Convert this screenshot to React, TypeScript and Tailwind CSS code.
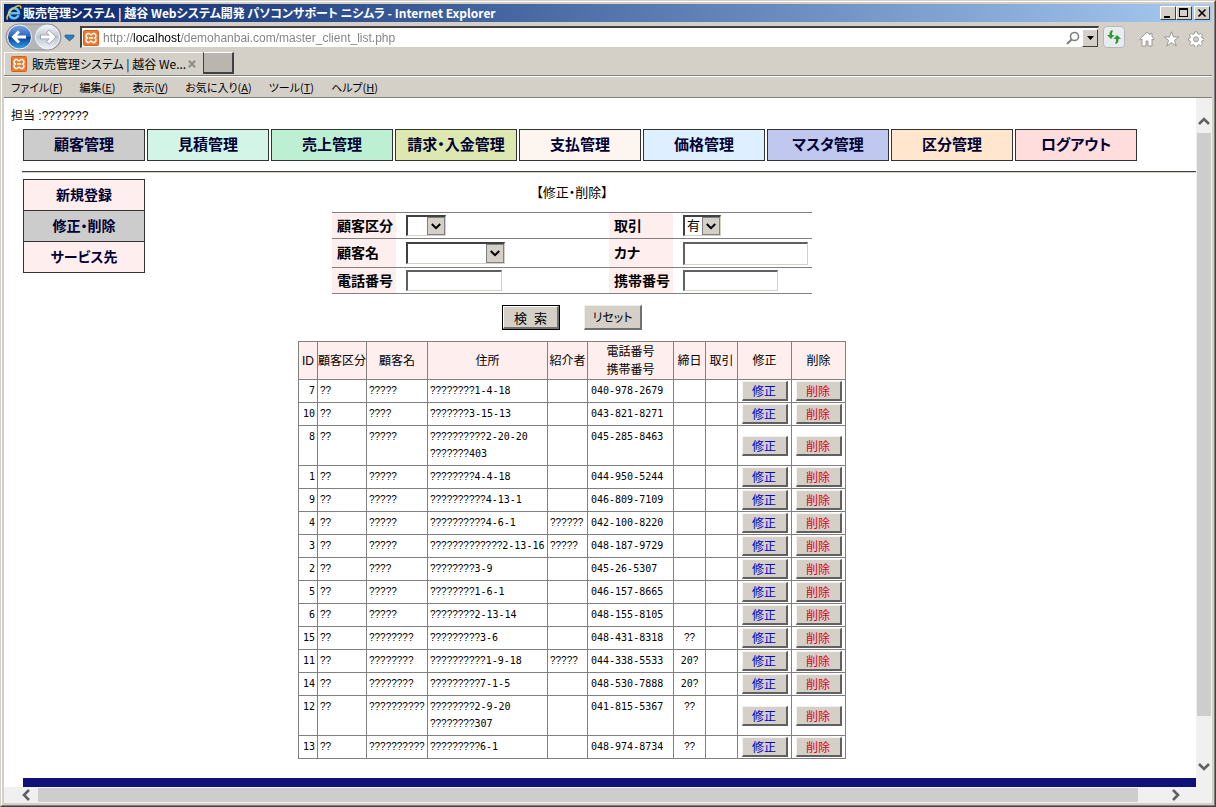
import React from 'react';

const JP = "font-['Liberation_Sans','Noto_Sans_CJK_JP',sans-serif]";

const NAV = [
  { label: '顧客管理', color: 'bg-[#cccccc]' },
  { label: '見積管理', color: 'bg-[#d3f5e8]' },
  { label: '売上管理', color: 'bg-[#bdf0d2]' },
  { label: '請求・入金管理', color: 'bg-[#dce8b0]' },
  { label: '支払管理', color: 'bg-[#fdf5f0]' },
  { label: '価格管理', color: 'bg-[#deefff]' },
  { label: 'マスタ管理', color: 'bg-[#c0c8f0]' },
  { label: '区分管理', color: 'bg-[#ffe6cc]' },
  { label: 'ログアウト', color: 'bg-[#ffdddd]' },
];

const SIDE = [
  { label: '新規登録', color: 'bg-[#ffeeee]' },
  { label: '修正・削除', color: 'bg-[#cccccc]' },
  { label: 'サービス先', color: 'bg-[#ffeeee]' },
];

const MENUS = [
  ['ファイル', 'F'],
  ['編集', 'E'],
  ['表示', 'V'],
  ['お気に入り', 'A'],
  ['ツール', 'T'],
  ['ヘルプ', 'H'],
];

interface Client {
  id: number;
  name: string;
  address: string[];
  referrer?: string;
  tel: string;
  closing?: string;
}

const CLIENTS: Client[] = [
  { id: 7, name: '?????', address: ['????????1-4-18'], tel: '040-978-2679' },
  { id: 10, name: '????', address: ['???????3-15-13'], tel: '043-821-8271' },
  { id: 8, name: '?????', address: ['??????????2-20-20', '???????403'], tel: '045-285-8463' },
  { id: 1, name: '?????', address: ['????????4-4-18'], tel: '044-950-5244' },
  { id: 9, name: '?????', address: ['??????????4-13-1'], tel: '046-809-7109' },
  { id: 4, name: '?????', address: ['??????????4-6-1'], referrer: '??????', tel: '042-100-8220' },
  { id: 3, name: '?????', address: ['?????????????2-13-16'], referrer: '?????', tel: '048-187-9729' },
  { id: 2, name: '????', address: ['????????3-9'], tel: '045-26-5307' },
  { id: 5, name: '?????', address: ['????????1-6-1'], tel: '046-157-8665' },
  { id: 6, name: '?????', address: ['????????2-13-14'], tel: '048-155-8105' },
  { id: 15, name: '????????', address: ['?????????3-6'], tel: '048-431-8318', closing: '??' },
  { id: 11, name: '????????', address: ['??????????1-9-18'], referrer: '?????', tel: '044-338-5533', closing: '20?' },
  { id: 14, name: '????????', address: ['?????????7-1-5'], tel: '048-530-7888', closing: '20?' },
  { id: 12, name: '??????????', address: ['????????2-9-20', '????????307'], tel: '041-815-5367', closing: '??' },
  { id: 13, name: '??????????', address: ['?????????6-1'], tel: '048-974-8734', closing: '??' },
];

// Numbers are set in a fixed width face, everything else in the proportional one
const Mixed: React.FC<{ text: string }> = ({ text }) => (
  <>
    {(text.match(/[\d-]+|[^\d-]+/g) || []).map((part, i) =>
      /[\d-]/.test(part) ? (
        <span key={i} className="font-['DejaVu_Sans_Mono',monospace]">{part}</span>
      ) : (
        <span key={i}>{part}</span>
      )
    )}
  </>
);

const IeLogo = () => (
  <svg viewBox="0 0 16 16" className="w-4 h-4 shrink-0" aria-hidden="true">
    <path d="M12.6 10.2A5 5 0 1 1 13 8.3H4.5" fill="none" stroke="#5cc3f3" strokeWidth="2.6" />
    <path d="M1.6 14.6C-.6 12 4 4.6 9.5 1.8 13 0 15.5.6 14.8 3.6" fill="none" stroke="#f5c53c" strokeWidth="1.4" />
  </svg>
);

const XamppIcon = () => (
  <svg viewBox="0 0 16 16" className="w-4 h-4 shrink-0" aria-hidden="true">
    <rect x=".5" y=".5" width="15" height="15" rx="1" fill="#ee7a2d" stroke="#d9601c" />
    <path d="M4.500 3.500h1.500l2 1.500 2-1.500h1.500l1.300 1.500v2l-1.300 1 1.300 1v2l-1.300 1.500H10L8 11l-2 1.500H4.500L3.200 11V9l1.300-1-1.300-1V5z" fill="none" stroke="#fff" strokeWidth="1.5" strokeLinejoin="round" />
    <path d="M6 8h4" stroke="#fff" strokeWidth="1.6" />
  </svg>
);

const Caption: React.FC<{ label: string; children: React.ReactNode }> = ({ label, children }) => (
  <button
    aria-label={label}
    className="w-4 h-[14px] bg-[#d4d0c8] border border-t-white border-l-white border-r-[#404040] border-b-[#404040] flex items-center justify-center"
  >
    <svg viewBox="0 0 12 10" className="w-3 h-[10px]" aria-hidden="true" shapeRendering="crispEdges">
      {children}
    </svg>
  </button>
);

const TitleBar = () => (
  <div className="h-[18px] bg-linear-to-r from-[#0a246a] to-[#a6caf0] flex items-center pl-[2px] pr-[2px]">
    <IeLogo />
    <h1 className="flex-1 ml-[1px] text-white font-bold text-[12px] leading-[18px] whitespace-nowrap font-['Noto_Sans_CJK_JP',sans-serif] [font-feature-settings:'palt']">
      販売管理システム | 越谷 Webシステム開発 パソコンサポート ニシムラ - Internet Explorer
    </h1>
    <div className="flex">
      <Caption label="最小化"><path d="M2 8h6v2H2z" /></Caption>
      <Caption label="最大化"><path d="M1 0h9v9H1zM2 2v6h7V2z" fillRule="evenodd" /></Caption>
      <span className="w-[2px]" />
      <Caption label="閉じる">
        <path d="M2.5 1.5l7 7M9.5 1.5l-7 7" stroke="#000" strokeWidth="1.6" shapeRendering="auto" />
      </Caption>
    </div>
  </div>
);

const AddressRow = () => (
  <div className="h-[30px] flex items-center">
    <div className="w-[76px] shrink-0 flex items-center">
      <svg viewBox="0 0 74 30" className="w-[74px] h-[30px]" aria-hidden="true">
        <defs>
          <linearGradient id="back" x1="0" y1="0" x2="0" y2="1">
            <stop offset="0" stopColor="#7aa5e0" />
            <stop offset=".48" stopColor="#2a62bd" />
            <stop offset=".52" stopColor="#0f3f98" />
            <stop offset="1" stopColor="#35a5ec" />
          </linearGradient>
          <linearGradient id="fwd" x1="0" y1="0" x2="0" y2="1">
            <stop offset="0" stopColor="#f5f7fa" />
            <stop offset=".5" stopColor="#bcc5d1" />
            <stop offset="1" stopColor="#eef2f8" />
          </linearGradient>
        </defs>
        <rect x="2" y="2" width="55" height="26" rx="13" fill="#b4b6ba" stroke="#8d9096" />
        <circle cx="15.5" cy="15" r="12" fill="url(#back)" stroke="#f0f4fa" />
        <circle cx="43.5" cy="15" r="12" fill="url(#fwd)" stroke="#f0f4fa" />
        <path d="M22 15H10M15 9.500L9.500 15l5.500 5.500" fill="none" stroke="#fff" strokeWidth="3" />
        <path d="M36 15h12M43.500 9l6 6-6 6" fill="none" stroke="#9aa1ab" strokeWidth="4.4" />
        <path d="M37 15h12M44 9.500l5.500 5.500-5.500 5.500" fill="none" stroke="#fff" strokeWidth="3" />
        <path d="M61 13h9v2l-4.500 4-4.500-4z" fill="#2c7fc0" stroke="#1b5288" strokeWidth=".6" />
      </svg>
    </div>
    <div className="flex-1 h-[22px] bg-white border-t-2 border-l-2 border-t-[#404040] border-l-[#404040] border-b border-r border-b-[#d4d0c8] border-r-[#d4d0c8] flex items-center pl-[1px]">
      <XamppIcon />
      <input
        aria-label="アドレス"
        readOnly
        value="http://localhost/demohanbai.com/master_client_list.php"
        className="flex-1 min-w-0 ml-1 outline-none text-[12px] leading-4 font-['Liberation_Sans',sans-serif] text-transparent bg-clip-text bg-[linear-gradient(90deg,#808080_30px,#000_30px,#000_78px,#808080_78px)]"
      />
      <svg viewBox="0 0 14 14" className="w-[14px] h-[14px] mr-[2px]" aria-hidden="true">
        <circle cx="8.5" cy="5.5" r="4" fill="none" stroke="#808080" strokeWidth="1.6" />
        <path d="M5.500 8.500L1 13" stroke="#808080" strokeWidth="2.2" />
      </svg>
      <button aria-label="履歴" className="w-4 h-[18px] bg-[#d4d0c8] border border-t-white border-l-white border-r-[#404040] border-b-[#404040] flex items-center justify-center">
        <svg viewBox="0 0 7 4" className="w-[7px] h-1" aria-hidden="true"><path d="M0 0h7L3.5 4z" /></svg>
      </button>
    </div>
    <button aria-label="最新の情報に更新" className="w-[22px] h-[22px] ml-1 rounded-sm border border-[#b4b8be] bg-[#e9ecee] flex items-center justify-center">
      <svg viewBox="0 0 16 16" className="w-4 h-4" aria-hidden="true" fill="#2f9a2f">
        <path d="M6 1C3.500 2 3.500 4 3.500 6H1l4 4 3.500-4H6C6 4 6 3 7 2z" />
        <path d="M10 15c2.500-1 2.500-3 2.500-5H15l-4-4-3.500 4H10c0 2 0 3-1 4z" />
      </svg>
    </button>
    <div className="flex items-center gap-2 ml-[14px] mr-2 mt-1">
      <button aria-label="ホーム" className="w-4 h-4">
        <svg viewBox="0 0 16 16" className="w-4 h-4" aria-hidden="true">
          <path d="M8 1L.8 8l1 1 1.200-1v7h4v-5h2v5h4V8l1.200 1 1-1L13 5.800V2.500h-2v1.400z" fill="#fff" stroke="#929292" strokeWidth=".9" />
        </svg>
      </button>
      <button aria-label="お気に入り" className="w-[17px] h-4">
        <svg viewBox="0 0 16 16" className="w-[17px] h-4" aria-hidden="true">
          <path d="M8 .8l2 5.200h5.300L11 9.300l1.700 5.700L8 11.600 3.300 15 5 9.300.7 6H6z" fill="#fff" stroke="#929292" strokeWidth=".9" />
        </svg>
      </button>
      <button aria-label="ツール" className="w-4 h-4">
        <svg viewBox="0 0 16 16" className="w-4 h-4" aria-hidden="true">
          <g fill="#fff" stroke="#929292" strokeWidth=".9">
            <path d="M6.800.8h2.400l.4 2 1.500.6 1.700-1.100 1.700 1.700-1.100 1.700.6 1.300 2 .4v2l-2 .5-.6 1.400 1.100 1.700-1.700 1.700-1.700-1.100-1.500.6-.4 2H6.800l-.4-2-1.500-.6-1.700 1.100L1.500 13l1.100-1.700L2 9.900l-1.500-.5v-2L2 7l.6-1.300L1.500 4l1.700-1.700 1.700 1.100 1.500-.6z" />
            <circle cx="8" cy="8.300" r="2.500" fill="#d4d0c8" />
          </g>
        </svg>
      </button>
    </div>
  </div>
);

const TabRow = () => (
  <div className="h-[23px] flex items-start">
    <div className="h-[23px] w-[198px] border-t border-l border-white flex items-center pl-[6px] pr-[6px]">
      <XamppIcon />
      <span className="flex-1 ml-[5px] text-[12px] leading-4 whitespace-nowrap text-black [font-feature-settings:'palt'] font-['Noto_Sans_CJK_JP',sans-serif]">
        販売管理システム | 越谷 We...
      </span>
      <button aria-label="タブを閉じる" className="w-2 h-2">
        <svg viewBox="0 0 8 8" className="w-2 h-2" aria-hidden="true">
          <path d="M.8.8l6.400 6.400M7.200.8L.8 7.200" stroke="#8c8c8c" strokeWidth="2" />
        </svg>
      </button>
    </div>
    <button aria-label="新しいタブ" className="ml-[1px] w-[31px] h-[22px] bg-[#bab6af] border-t border-t-white border-l border-l-[#404040] border-r-2 border-b-2 border-r-[#404040] border-b-[#404040]" />
  </div>
);

const MenuBar = () => (
  <div className="h-[22px] border-t border-t-white border-b border-b-[#808080] flex items-center pl-[7px] gap-[17px] text-[11px] leading-4 [font-feature-settings:'palt'] font-['Noto_Sans_CJK_JP',sans-serif]">
    {MENUS.map(([label, key]) => (
      <button key={key} className="whitespace-nowrap">
        {label}(<span className="underline">{key}</span>)
      </button>
    ))}
  </div>
);

const SelectBox: React.FC<{ id: string; size: string; options: string[] }> = ({ id, size, options }) => (
  <div className={`relative ${size}`}>
    <select
      id={id}
      className="block appearance-none w-full h-full bg-white border-t-2 border-l-2 border-t-[#404040] border-l-[#404040] border-r border-b border-r-[#d4d0c8] border-b-[#d4d0c8] pl-[2px] text-[13px] leading-4"
    >
      {options.map((o) => <option key={o}>{o}</option>)}
    </select>
    <span className="pointer-events-none absolute top-[2px] bottom-[1px] right-[1px] w-[18px] bg-[#d4d0c8] border border-[#808080] flex items-center justify-center">
      <svg viewBox="0 0 10 7" className="w-[10px] h-[7px]" aria-hidden="true">
        <path d="M.8 1L5 5.200 9.200 1" fill="none" stroke="#000" strokeWidth="2" />
      </svg>
    </span>
  </div>
);

const TextBox: React.FC<{ id: string; size: string }> = ({ id, size }) => (
  <input
    id={id}
    type="text"
    className={`block ${size} bg-white border-t-2 border-l-2 border-t-[#606060] border-l-[#606060] border-r border-b border-r-[#d4d0c8] border-b-[#d4d0c8] px-1 text-[13px]`}
  />
);

const FieldLabel: React.FC<{ htmlFor: string; children: string }> = ({ htmlFor, children }) => (
  <label htmlFor={htmlFor} className="w-16 shrink-0 self-stretch bg-[#ffeeee] pl-[5px] flex items-center font-bold text-[14px] leading-5 whitespace-nowrap">
    {children}
  </label>
);

const SearchForm = () => (
  <form className="flex flex-col items-center" onSubmit={(e) => e.preventDefault()}>
    <div className="w-[480px] max-w-full border-t border-[#808080] [font-feature-settings:'palt']">
      <div className="h-[26px] border-b border-[#808080] flex items-center">
        <FieldLabel htmlFor="kubun">顧客区分</FieldLabel>
        <div className="flex-1 pl-[10px]"><SelectBox id="kubun" size="w-10 h-[21px]" options={['']} /></div>
        <FieldLabel htmlFor="torihiki">取引</FieldLabel>
        <div className="w-[139px] pl-[10px]"><SelectBox id="torihiki" size="w-[38px] h-[21px]" options={['有', '無']} /></div>
      </div>
      <div className="h-[29px] border-b border-[#808080] flex items-center">
        <FieldLabel htmlFor="name">顧客名</FieldLabel>
        <div className="flex-1 pl-[10px]"><SelectBox id="name" size="w-[99px] h-[22px]" options={['']} /></div>
        <FieldLabel htmlFor="kana">カナ</FieldLabel>
        <div className="w-[139px] pl-[10px]"><TextBox id="kana" size="w-[125px] h-[23px]" /></div>
      </div>
      <div className="h-[26px] border-b border-[#808080] flex items-center">
        <FieldLabel htmlFor="tel">電話番号</FieldLabel>
        <div className="flex-1 pl-[10px]"><TextBox id="tel" size="w-24 h-[21px]" /></div>
        <FieldLabel htmlFor="mobile">携帯番号</FieldLabel>
        <div className="w-[139px] pl-[10px]"><TextBox id="mobile" size="w-[95px] h-[21px]" /></div>
      </div>
    </div>
    <div className="flex gap-6 mt-[11px]">
      <div className="w-[58px] h-[25px] border border-black">
        <button type="submit" className="block w-full h-full bg-[#d4d0c8] border border-t-white border-l-white border-r-2 border-b-2 border-r-[#707070] border-b-[#707070] pt-[2px] text-[13px] leading-5 whitespace-pre">検  索</button>
      </div>
      <button type="reset" className="w-[58px] h-[25px] bg-[#d4d0c8] border border-t-[#f0efec] border-l-[#f0efec] border-r-2 border-b-2 border-r-[#707070] border-b-[#707070] pt-[2px] text-[12px] leading-5 whitespace-nowrap [font-feature-settings:'palt']">リセット</button>
    </div>
  </form>
);

const RowButton: React.FC<{ color: string; children: string }> = ({ color, children }) => (
  <button className={`block mx-auto w-[46px] h-5 bg-[#d4d0c8] border border-t-[#f4f3f0] border-l-[#f4f3f0] border-r-2 border-b-2 border-r-[#606060] border-b-[#606060] pt-[2px] text-[12px] leading-4 ${color}`}>
    {children}
  </button>
);

const TH = 'border border-[#808080] p-0 font-normal whitespace-nowrap';
const TD = 'border border-[#808080] px-[2px] pt-[2px] pb-[3px] align-top whitespace-nowrap';

const ClientTable = () => (
  <table className="mx-auto mt-[11px] w-[548px] table-fixed border-collapse">
    <colgroup>
      <col className="w-[19px]" />
      <col className="w-[49px]" />
      <col className="w-[61px]" />
      <col className="w-[120px]" />
      <col className="w-[40px]" />
      <col className="w-[86px]" />
      <col className="w-[32px]" />
      <col className="w-[32px]" />
      <col className="w-[54px]" />
      <col className="w-[54px]" />
    </colgroup>
    <thead>
      <tr className="h-[38px] bg-[#ffeeee] text-[12px] leading-[18px]">
        <th className={TH}>ID</th>
        <th className={TH}>顧客区分</th>
        <th className={TH}>顧客名</th>
        <th className={TH}>住所</th>
        <th className={TH}>紹介者</th>
        <th className={TH}>電話番号<br />携帯番号</th>
        <th className={TH}>締日</th>
        <th className={TH}>取引</th>
        <th className={TH}>修正</th>
        <th className={TH}>削除</th>
      </tr>
    </thead>
    <tbody className="text-[10px] leading-[17px]">
      {CLIENTS.map((client) => (
        <tr key={client.id}>
          <td className={`${TD} text-right`}><Mixed text={String(client.id)} /></td>
          <td className={TD}>??</td>
          <td className={TD}>{client.name}</td>
          <td className={TD}>
            {client.address.map((line) => (
              <div key={line}><Mixed text={line} /></div>
            ))}
          </td>
          <td className={TD}>{client.referrer}</td>
          <td className={TD}><div className="pl-[1px]"><Mixed text={client.tel} /></div></td>
          <td className={`${TD} text-center`}>{client.closing && <Mixed text={client.closing} />}</td>
          <td className={TD} />
          <td className="border border-[#808080] p-0 align-middle"><RowButton color="text-[#0000cc]">修正</RowButton></td>
          <td className="border border-[#808080] p-0 align-middle"><RowButton color="text-[#dd0022]">削除</RowButton></td>
        </tr>
      ))}
    </tbody>
  </table>
);

const Arrow: React.FC<{ label: string; d: string; className: string }> = ({ label, d, className }) => (
  <button aria-label={label} className={`flex items-center justify-center shrink-0 ${className}`}>
    <svg viewBox="0 0 12 12" className="w-3 h-3" aria-hidden="true">
      <path d={d} fill="none" stroke="#606060" strokeWidth="2.6" />
    </svg>
  </button>
);

const Page = () => (
  <div className="flex-1 min-w-0 bg-white flex flex-col pt-[9px]">
    <p className="pl-[7px] text-[12px] leading-[18px]">担当 :???????</p>
    <nav className="flex gap-[2px] ml-[19px] mt-1">
      {NAV.map(({ label, color }) => (
        <a key={label} href="#" className={`w-[122px] h-8 border border-[#333333] flex items-center justify-center text-[#000033] font-bold text-[15px] leading-5 whitespace-nowrap [font-feature-settings:'palt'] ${color}`}>
          {label}
        </a>
      ))}
    </nav>
    <hr className="ml-[18px] mt-[10px] h-[2px] border-t border-t-[#404040] border-b border-b-[#d4d0c8]" />
    <div className="flex items-start ml-[19px] mt-[6px]">
      <nav className="w-[122px] shrink-0 border-t border-[#333333]">
        {SIDE.map(({ label, color }) => (
          <a key={label} href="#" className={`h-[31px] border-x border-b border-[#333333] flex items-center justify-center text-[#000033] font-bold text-[14px] leading-5 [font-feature-settings:'palt'] ${color}`}>
            {label}
          </a>
        ))}
      </nav>
      <main className="flex-1 max-w-[854px]">
        <h2 className="text-center text-[13px] leading-5 mt-1 mb-[9px] [font-feature-settings:'palt']">【修正・削除】</h2>
        <SearchForm />
        <ClientTable />
      </main>
    </div>
    <div className="mt-auto pt-4 pl-[19px]">
      <div className="h-[9px] bg-[#101078]" />
    </div>
  </div>
);

export default function App() {
  return (
    <div className={`min-h-screen flex flex-col bg-[#d4d0c8] border border-l-[#d4d0c8] border-t-[#d4d0c8] border-r-[#404040] border-b-[#404040] text-black ${JP}`}>
      <div className="flex-1 flex flex-col border border-t-white border-l-white border-r-[#808080] border-b-[#808080] p-[2px]">
        <TitleBar />
        <AddressRow />
        <TabRow />
        <div className="h-px bg-[#808080]" />
        <MenuBar />
        <div className="flex-1 flex">
          <Page />
          <div className="w-4 shrink-0 bg-[#f0f0f0] flex flex-col">
            <Arrow label="上へ" d="M1 9l5-5 5 5" className="h-[35px] pt-[10px]" />
            <div className="flex-[583] bg-[#cdcdcd] mx-[1px]" />
            <div className="flex-[38]" />
            <Arrow label="下へ" d="M1 4l5 5 5-5" className="h-[33px] pb-[9px]" />
          </div>
        </div>
        <div className="h-4 bg-[#f0f0f0] flex items-stretch">
          <Arrow label="左へ" d="M9 1L4 6l5 5" className="w-[34px] pl-[9px]" />
          <div className="flex-[1100] bg-[#cdcdcd] my-[1px]" />
          <div className="flex-[22]" />
          <Arrow label="右へ" d="M4 1l5 5-5 5" className="w-[52px] pr-[22px]" />
        </div>
      </div>
    </div>
  );
}
